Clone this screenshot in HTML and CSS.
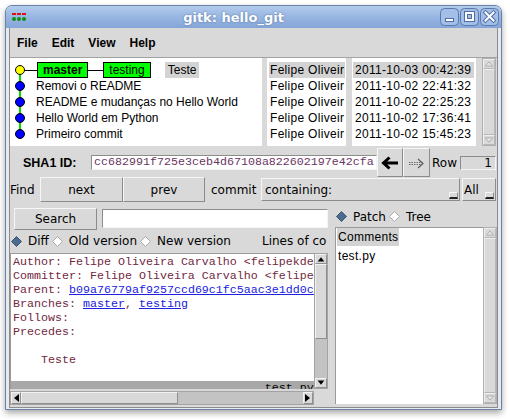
FILE: index.html
```html
<!DOCTYPE html>
<html>
<head>
<meta charset="utf-8">
<title>gitk: hello_git</title>
<link rel="stylesheet" href="styles.css">
</head>
<body>
<div class="window">
  <div class="titlebar">
    <svg class="appicon" width="15" height="9" viewBox="0 0 15 9">
      <rect x="0" y="0" width="4" height="2" fill="#e01010"/>
      <rect x="5" y="0" width="4" height="2" fill="#e01010"/>
      <rect x="10" y="0" width="4" height="2" fill="#e01010"/>
      <circle cx="2" cy="6" r="2" fill="#109010"/>
      <circle cx="7" cy="6" r="2" fill="#109010"/>
      <circle cx="12" cy="6" r="2" fill="#109010"/>
    </svg>
    <div class="title">gitk: hello_git</div>
    <div class="wmbtns">
      <svg class="wmbtn" width="19" height="18" viewBox="0 0 19 18">
        <rect x="0.5" y="0.5" width="18" height="17" rx="4" fill="#a3bfe7" stroke="#5a79ad"/>
        <rect x="5.5" y="10.5" width="8" height="3" fill="#fff" stroke="#4f6fa6"/>
      </svg>
      <svg class="wmbtn" width="19" height="18" viewBox="0 0 19 18">
        <rect x="0.5" y="0.5" width="18" height="17" rx="4" fill="#a3bfe7" stroke="#5a79ad"/>
        <rect x="4.5" y="3.5" width="10" height="10" fill="#fff" stroke="#4f6fa6"/>
        <rect x="7.5" y="6.5" width="4" height="4" fill="#a3bfe7" stroke="#4f6fa6"/>
      </svg>
      <svg class="wmbtn" width="19" height="18" viewBox="0 0 19 18">
        <rect x="0.5" y="0.5" width="18" height="17" rx="4" fill="#a3bfe7" stroke="#5a79ad"/>
        <path d="M5.5 4.5 L13.5 12.5 M13.5 4.5 L5.5 12.5" stroke="#4f6fa6" stroke-width="4" stroke-linecap="square"/>
        <path d="M5.5 4.5 L13.5 12.5 M13.5 4.5 L5.5 12.5" stroke="#fff" stroke-width="2" stroke-linecap="square"/>
      </svg>
    </div>
  </div>
  <div class="client">
    <div class="app">
      <div class="menubar">
        <span class="menu">File</span><span class="menu">Edit</span><span class="menu">View</span><span class="menu">Help</span>
      </div>

      <div class="toppane">
        <div class="graph">
          <div class="crow">
            <svg class="gcell" width="27" height="16" viewBox="0 0 27 16">
              <line x1="10" y1="8" x2="10" y2="16" stroke="#00dd00" stroke-width="2"/>
              <line x1="14" y1="8.5" x2="27" y2="8.5" stroke="#000" stroke-width="1"/>
              <circle cx="10" cy="8" r="4.5" fill="#ffff00" stroke="#000"/>
            </svg>
            <span class="tag head">master</span><span class="conn"></span><span class="tag">testing</span><span class="msg sel">Teste</span>
          </div>
          <div class="crow">
            <svg class="gcell" width="26" height="16" viewBox="0 0 26 16">
              <line x1="10" y1="0" x2="10" y2="16" stroke="#00dd00" stroke-width="2"/>
              <circle cx="10" cy="8" r="4.5" fill="#0000ff" stroke="#000"/>
            </svg>
            <span class="msg">Removi o README</span>
          </div>
          <div class="crow">
            <svg class="gcell" width="26" height="16" viewBox="0 0 26 16">
              <line x1="10" y1="0" x2="10" y2="16" stroke="#00dd00" stroke-width="2"/>
              <circle cx="10" cy="8" r="4.5" fill="#0000ff" stroke="#000"/>
            </svg>
            <span class="msg">README e mudanças no Hello World</span>
          </div>
          <div class="crow">
            <svg class="gcell" width="26" height="16" viewBox="0 0 26 16">
              <line x1="10" y1="0" x2="10" y2="16" stroke="#00dd00" stroke-width="2"/>
              <circle cx="10" cy="8" r="4.5" fill="#0000ff" stroke="#000"/>
            </svg>
            <span class="msg">Hello World em Python</span>
          </div>
          <div class="crow">
            <svg class="gcell" width="26" height="16" viewBox="0 0 26 16">
              <line x1="10" y1="0" x2="10" y2="8" stroke="#00dd00" stroke-width="2"/>
              <circle cx="10" cy="8" r="4.5" fill="#0000ff" stroke="#000"/>
            </svg>
            <span class="msg">Primeiro commit</span>
          </div>
        </div>
        <div class="authors">
          <div class="lrow sel">Felipe Oliveir</div>
          <div class="lrow">Felipe Oliveir</div>
          <div class="lrow">Felipe Oliveir</div>
          <div class="lrow">Felipe Oliveir</div>
          <div class="lrow">Felipe Oliveir</div>
        </div>
        <div class="dates">
          <div class="lrow sel">2011-10-03 00:42:39</div>
          <div class="lrow">2011-10-02 22:41:32</div>
          <div class="lrow">2011-10-02 22:25:23</div>
          <div class="lrow">2011-10-02 17:36:41</div>
          <div class="lrow">2011-10-02 15:45:23</div>
        </div>
        <div class="vsb dis top">
          <div class="arr"><svg width="12" height="8" viewBox="0 0 12 8"><polygon points="1.5,6.5 6,1.5 10.5,6.5" fill="#e4e4e4" stroke="#a8a8a8"/></svg></div>
          <div class="thumb"></div>
          <div class="arr"><svg width="12" height="8" viewBox="0 0 12 8"><polygon points="1.5,1.5 6,6.5 10.5,1.5" fill="#e4e4e4" stroke="#a8a8a8"/></svg></div>
        </div>
      </div>

      <div class="sharow">
        <span class="sha-label">SHA1 ID:</span>
        <div class="entry sha-entry">cc682991f725e3ceb4d67108a822602197e42cfa</div>
        <div class="btn navbtn">
          <svg width="18" height="14" viewBox="0 0 18 14"><path d="M17 7 H3 M8.5 1.5 L2.5 7 L8.5 12.5" fill="none" stroke="#000" stroke-width="3"/></svg>
        </div>
        <div class="btn navbtn wide">
          <svg width="18" height="14" viewBox="0 0 18 14">
            <path d="M1 6.5 H13" stroke="#6a6a6a" stroke-width="1" stroke-dasharray="1.5 1"/>
            <path d="M1 8.5 H13" stroke="#6a6a6a" stroke-width="1" stroke-dasharray="1.5 1"/>
            <path d="M10 3 L15 7.5 L10 12" fill="none" stroke="#5a5a5a" stroke-width="1.2"/>
          </svg>
        </div>
        <span class="rowlabel">Row</span>
        <div class="entry rowentry">1</div>
      </div>

      <div class="findrow">
        <span class="findlabel">Find</span>
        <div class="btn findbtn">next</div>
        <div class="btn findbtn prev">prev</div>
        <span class="commitlabel">commit</span>
        <div class="combo containing"><span>containing:</span><span class="ind"></span></div>
        <div class="combo all"><span>All</span><span class="ind"></span></div>
      </div>

      <div class="lower">
        <div class="leftcol">
          <div class="searchrow">
            <div class="btn searchbtn">Search</div>
            <div class="entry searchentry"></div>
          </div>
          <div class="diffrow">
            <svg class="radio" width="11" height="11" viewBox="0 0 11 11"><polygon points="5.5,0.5 10.5,5.5 5.5,10.5 0.5,5.5" fill="#4c6b8f" stroke="#3b5676"/></svg>
            <span class="rlabel">Diff</span>
            <svg class="radio" width="11" height="11" viewBox="0 0 11 11"><polygon points="5.5,0.5 10.5,5.5 5.5,10.5 0.5,5.5" fill="#fff" stroke="#a9a9a9"/></svg>
            <span class="rlabel">Old version</span>
            <svg class="radio" width="11" height="11" viewBox="0 0 11 11"><polygon points="5.5,0.5 10.5,5.5 5.5,10.5 0.5,5.5" fill="#fff" stroke="#a9a9a9"/></svg>
            <span class="rlabel">New version</span>
            <span class="ctxlabel">Lines of co</span>
          </div>
          <div class="ctextwrap">
            <div class="ctext">
              <div class="ln">Author: Felipe Oliveira Carvalho &lt;felipekde</div>
              <div class="ln">Committer: Felipe Oliveira Carvalho &lt;felipe</div>
              <div class="ln">Parent: <span class="link">b09a76779af9257ccd69c1fc5aac3e1dd0c</span></div>
              <div class="ln">Branches: <span class="link">master</span>, <span class="link">testing</span></div>
              <div class="ln">Follows:</div>
              <div class="ln">Precedes:</div>
              <div class="ln"> </div>
              <div class="ln">    Teste</div>
              <div class="ln"> </div>
              <div class="ln filehdr">                                    test.py</div>
            </div>
            <div class="vsb">
              <div class="arr"><svg width="12" height="8" viewBox="0 0 12 8"><polygon points="2,7 6,2 10,7" fill="#000"/></svg></div>
              <div class="thumb dthumb"></div>
              <div class="trough"></div>
              <div class="arr"><svg width="12" height="8" viewBox="0 0 12 8"><polygon points="2,1 6,6 10,1" fill="#000"/></svg></div>
            </div>
          </div>
          <div class="hsb">
            <div class="harr"><svg width="8" height="12" viewBox="0 0 8 12"><polygon points="7,2 2,6 7,10" fill="#000"/></svg></div>
            <div class="hthumb"></div>
            <div class="trough"></div>
            <div class="harr"><svg width="8" height="12" viewBox="0 0 8 12"><polygon points="1,2 6,6 1,10" fill="#000"/></svg></div>
          </div>
        </div>
        <div class="rightcol">
          <div class="patchrow">
            <svg class="radio" width="11" height="11" viewBox="0 0 11 11"><polygon points="5.5,0.5 10.5,5.5 5.5,10.5 0.5,5.5" fill="#4c6b8f" stroke="#3b5676"/></svg>
            <span class="rlabel">Patch</span>
            <svg class="radio" width="11" height="11" viewBox="0 0 11 11"><polygon points="5.5,0.5 10.5,5.5 5.5,10.5 0.5,5.5" fill="#fff" stroke="#a9a9a9"/></svg>
            <span class="rlabel">Tree</span>
          </div>
          <div class="filewrap">
            <div class="filelist">
              <div class="frow sel">Comments</div>
              <div class="frow">test.py</div>
            </div>
            <div class="vsb dis">
              <div class="arr"><svg width="12" height="8" viewBox="0 0 12 8"><polygon points="1.5,6.5 6,1.5 10.5,6.5" fill="#e4e4e4" stroke="#a8a8a8"/></svg></div>
              <div class="thumb"></div>
              <div class="arr"><svg width="12" height="8" viewBox="0 0 12 8"><polygon points="1.5,1.5 6,6.5 10.5,1.5" fill="#e4e4e4" stroke="#a8a8a8"/></svg></div>
            </div>
          </div>
        </div>
      </div>
    </div>
  </div>
</div>
</body>
</html>
```

FILE: styles.css
```css
* { box-sizing: border-box; }
html, body { margin: 0; padding: 0; }
body {
  width: 510px;
  height: 419px;
  overflow: hidden;
  background: #ffffff;
  font-family: "DejaVu Sans", sans-serif;
  font-size: 12px;
  color: #000;
}

.window {
  margin: 5px 0 0 5px;
  width: 497px;
  height: 405px;
  border: 1px solid #6a82aa;
  border-radius: 7px 7px 0 0;
  background: #e6e9ee;
  box-shadow: 0 3px 6px rgba(0, 0, 0, 0.35);
  display: flex;
  flex-direction: column;
}

.titlebar {
  height: 22px;
  flex: none;
  display: flex;
  align-items: center;
  padding: 0 2px 0 6px;
  border-radius: 6px 6px 0 0;
  background: linear-gradient(#b4cbec 0%, #9ab8e3 45%, #84a5d8 100%);
}
.appicon { flex: none; margin-top: 1px; }
.title {
  flex: 1;
  text-align: center;
  color: #ffffff;
  font: bold 13px "DejaVu Sans", sans-serif;
  text-shadow: 0 0 2px #4d6a98;
}
.wmbtns { display: flex; gap: 1px; }
.wmbtn { display: block; }

.client {
  flex: 1;
  display: flex;
  padding: 0 3px 1px 3px;
}
.app {
  flex: 1;
  background: #d9d9d9;
  border: 1px solid #8c8c8c;
  border-top: none;
  display: flex;
  flex-direction: column;
  overflow: hidden;
}

/* menu */
.menubar {
  height: 30px;
  flex: none;
  display: flex;
  align-items: center;
  border-bottom: 1px solid #a3a3a3;
  font: bold 12px "Liberation Sans", sans-serif;
}
.menu { padding: 0 7px; }

/* commit list */
.toppane { height: 88px; flex: none; display: flex; }
.graph, .authors, .dates {
  background: #ffffff;
  padding-top: 4px;
  overflow: hidden;
  font: 12px "Liberation Sans", sans-serif;
  white-space: nowrap;
}
.graph { width: 252px; }
.authors { width: 79px; margin-left: 5px; }
.dates { width: 124px; margin-left: 6px; }
.crow { height: 16px; display: flex; align-items: center; }
.gcell { display: block; flex: none; }
.tag {
  height: 16px;
  line-height: 14px;
  border: 1px solid #000;
  background: #00ff00;
  padding: 0 5px;
}
.tag.head { font-weight: bold; }
.conn { width: 15px; height: 1px; background: #000; }
.msg { line-height: 16px; }
.tag + .msg { margin-left: 14px; }
.msg.sel { background: #d3d3d3; padding: 0 3px; }
.lrow { height: 16px; line-height: 16px; letter-spacing: 0.3px; overflow: hidden; }
.authors .lrow { margin: 0 1px 0 2px; padding-left: 1px; }
.dates .lrow { margin: 0 2px 0 1px; padding-left: 2px; }
.lrow.sel { background: #d3d3d3; }

/* scrollbars */
.vsb {
  width: 14px;
  flex: none;
  display: flex;
  flex-direction: column;
  background: #c3c3c3;
  border: 1px solid #a3a3a3;
}
.toppane .vsb { margin-left: 6px; }
.arr {
  height: 10px;
  flex: none;
  display: flex;
  align-items: center;
  justify-content: center;
  background: #d9d9d9;
  border: 1px solid;
  border-color: #f2f2f2 #8e8e8e #8e8e8e #f2f2f2;
}
.arr svg, .harr svg { display: block; }
.thumb {
  background: #d9d9d9;
  border: 1px solid;
  border-color: #f2f2f2 #8e8e8e #8e8e8e #f2f2f2;
}
.dthumb { height: 75px; flex: none; }
.trough { flex: 1; background: #c3c3c3; }
.vsb.dis { background: #d9d9d9; border-color: #b0b0b0; }
.vsb.dis .arr { border-color: #eeeeee #b8b8b8 #b8b8b8 #eeeeee; }
.vsb.dis .thumb { flex: 1; border-color: #eeeeee #b8b8b8 #b8b8b8 #eeeeee; }

.hsb {
  margin-top: 2px;
  width: 304px;
  height: 14px;
  flex: none;
  display: flex;
  background: #c3c3c3;
  border: 1px solid #a3a3a3;
}
.harr {
  width: 10px;
  flex: none;
  display: flex;
  align-items: center;
  justify-content: center;
  background: #d9d9d9;
  border: 1px solid;
  border-color: #f2f2f2 #8e8e8e #8e8e8e #f2f2f2;
}
.hthumb {
  width: 157px;
  flex: none;
  background: #d9d9d9;
  border: 1px solid;
  border-color: #f2f2f2 #8e8e8e #8e8e8e #f2f2f2;
}

/* common widgets */
.btn {
  flex: none;
  display: flex;
  align-items: center;
  justify-content: center;
  background: #d9d9d9;
  border: 1px solid;
  border-color: #f6f6f6 #8c8c8c #8c8c8c #f6f6f6;
}
.entry {
  flex: none;
  background: #ffffff;
  border: 1px solid;
  border-color: #8c8c8c #f4f4f4 #f4f4f4 #8c8c8c;
  overflow: hidden;
  white-space: nowrap;
}

/* sha row */
.sharow { margin-top: 2px; height: 29px; flex: none; display: flex; align-items: center; }
.sha-label {
  margin-left: 13px;
  width: 54px;
  font: bold 12.5px "Liberation Sans", sans-serif;
  white-space: nowrap;
}
.sha-entry {
  margin-left: 14px;
  width: 286px;
  height: 15px;
  padding-left: 2px;
  font: 11.67px/13px "Liberation Mono", monospace;
  color: #6a3462;
}
.navbtn { width: 26px; height: 29px; }
.navbtn.wide { width: 27px; }
.rowlabel { margin-left: 2px; width: 28px; }
.rowentry {
  width: 36px;
  height: 14px;
  background: #d9d9d9;
  text-align: right;
  padding-right: 3px;
  line-height: 12px;
}

/* find row */
.findrow { height: 25px; flex: none; display: flex; align-items: center; }
.findlabel { width: 30px; }
.findbtn { width: 83px; height: 25px; }
.findbtn.prev { width: 82px; }
.commitlabel { margin-left: 6px; width: 50px; }
.combo {
  flex: none;
  height: 23px;
  display: flex;
  align-items: center;
  padding-left: 3px;
  background: #d9d9d9;
  border: 1px solid;
  border-color: #f6f6f6 #8c8c8c #8c8c8c #f6f6f6;
}
.combo.containing { width: 199px; }
.combo.all { width: 34px; margin-left: 2px; padding-left: 1px; }
.ind {
  margin-left: auto;
  margin-right: 1px;
  align-self: flex-end;
  margin-bottom: 1px;
  width: 9px;
  height: 7px;
  background: #d9d9d9;
  border: 1px solid;
  border-color: #f6f6f6 #8c8c8c #222 #f6f6f6;
  border-bottom-width: 2px;
}

/* lower area */
.lower { flex: 1; display: flex; }
.leftcol { width: 320px; flex: none; display: flex; flex-direction: column; }
.searchrow { margin-top: 4px; height: 25px; flex: none; display: flex; align-items: center; }
.searchbtn { margin-left: 4px; width: 83px; height: 22px; }
.searchentry { margin-left: 5px; width: 226px; height: 19px; }
.diffrow {
  height: 20px;
  flex: none;
  display: flex;
  align-items: center;
  white-space: nowrap;
  overflow: hidden;
}
.radio { flex: none; display: block; margin-left: 3px; }
.diffrow .radio:first-child, .patchrow .radio:first-child { margin-left: 1px; }
.rlabel { margin-left: 6px; }
.ctxlabel { margin-left: 31px; }

.ctextwrap { margin-top: 2px; height: 136px; flex: none; display: flex; }
.ctext {
  width: 304px;
  flex: none;
  background: #ffffff;
  border-left: 1px solid #9a9a9a;
  border-top: 1px solid #9a9a9a;
  padding: 1px 0 0 2px;
  overflow: hidden;
  font: 11.67px/14px "Liberation Mono", monospace;
  color: #72283f;
}
.ln { height: 14px; white-space: pre; }
.link { color: #2020e0; text-decoration: underline; }
.filehdr { background: #a8a8a8; margin-left: -2px; padding-left: 2px; color: #000; }

.rightcol { flex: 1; margin-left: 5px; display: flex; flex-direction: column; }
.patchrow { margin-top: 4px; height: 21px; flex: none; display: flex; align-items: center; }
.filewrap { height: 177px; flex: none; display: flex; }
.filelist {
  flex: 1;
  background: #ffffff;
  border-left: 1px solid #9a9a9a;
  border-top: 1px solid #9a9a9a;
  padding: 0 0 0 1px;
  font: 12px "Liberation Sans", sans-serif;
  letter-spacing: 0.3px;
}
.frow { height: 18px; line-height: 18px; padding-left: 1px; }
.frow.sel { background: #d3d3d3; display: inline-block; padding-right: 1px; }
.frow + .frow { margin-top: 1px; }
```
